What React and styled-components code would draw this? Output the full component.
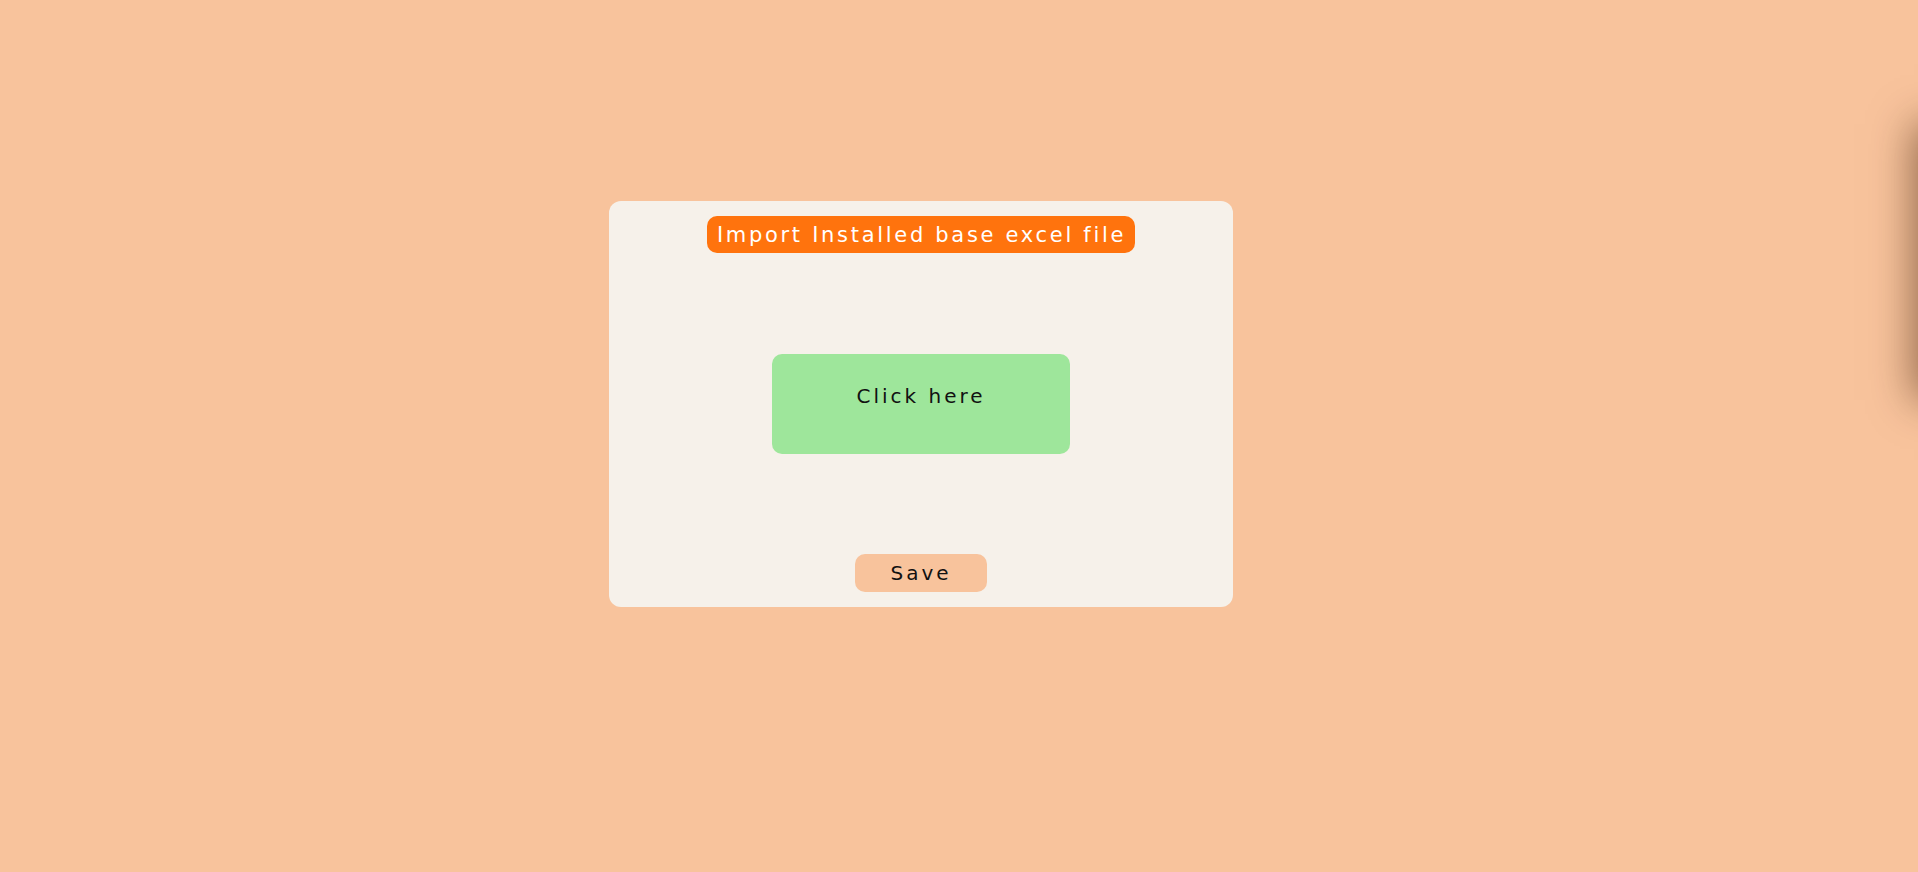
import React from 'react'
import styled, { createGlobalStyle } from 'styled-components'

const GlobalStyle = createGlobalStyle`
  html, body {
    margin: 0;
    padding: 0;
    height: 100%;
    overflow: hidden;
    background: #f8c39c;
    font-family: 'DejaVu Sans', Verdana, sans-serif;
  }
`

const Page = styled.div`
  position: relative;
  height: 872px;
  display: flex;
  justify-content: center;
  align-items: flex-start;
  padding: 201px 76px 0 0;
  box-sizing: border-box;
`

const Card = styled.div`
  width: 624px;
  height: 406px;
  box-sizing: border-box;
  background: #f6f1ea;
  border-radius: 12px;
  padding: 15px;
  display: flex;
  flex-direction: column;
  align-items: center;
  justify-content: space-between;
`

const Title = styled.div`
  background: #ff730d;
  color: #fff;
  border-radius: 10px;
  padding: 8px 9px 6px 10px;
  font-size: 21px;
  letter-spacing: 2.7px;
  line-height: 23px;
`

const DropZone = styled.div`
  width: 298px;
  height: 100px;
  box-sizing: border-box;
  background: #9ee69b;
  border-radius: 10px;
  padding-top: 31px;
  text-align: center;
  color: #111;
  font-size: 20px;
  letter-spacing: 3px;
  line-height: 23px;
  cursor: pointer;
`

const SaveButton = styled.button`
  width: 132px;
  height: 38px;
  border: none;
  border-radius: 10px;
  background: #f8c39c;
  color: #111;
  font-family: inherit;
  font-size: 20px;
  letter-spacing: 3px;
  padding: 0;
  cursor: pointer;
`

const Drawer = styled.div`
  position: absolute;
  left: 100%;
  top: 128px;
  width: 320px;
  height: 268px;
  background: #fff;
  box-shadow: 0 0 40px 4px rgba(60, 30, 10, 0.55);
`

export default function App() {
  return (
    <>
      <GlobalStyle />
      <Page>
        <Card>
          <Title>Import Installed base excel file</Title>
          <DropZone>Click here</DropZone>
          <SaveButton>Save</SaveButton>
        </Card>
        <Drawer />
      </Page>
    </>
  )
}
